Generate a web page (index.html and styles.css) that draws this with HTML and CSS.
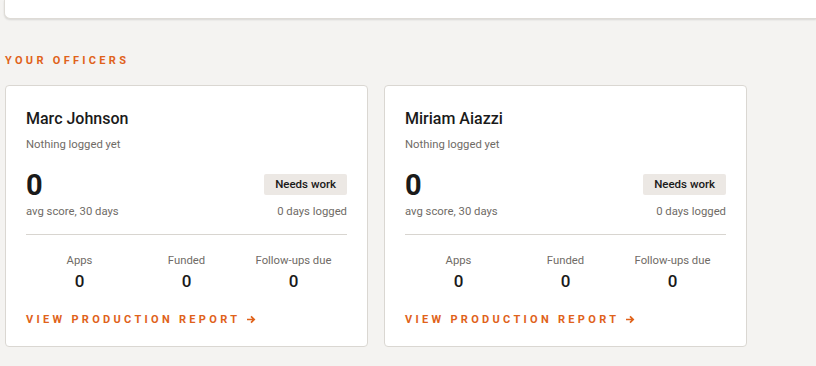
FILE: index.html
```html
<html>
<head>
  <link rel="stylesheet" href="styles.css">
</head>
<body>
<div class="toppanel"></div>
<h2 class="sectiontitle">Your officers</h2>
<div class="officers">
  <div class="officer">
    <div class="naam">Marc Johnson</div>
    <div class="sub">Nothing logged yet</div>
    <div class="scorerow">
      <div class="score">0</div>
      <div class="badge">Needs work</div>
    </div>
    <div class="scorerow meta">
      <span>avg score, 30 days</span>
      <span>0 days logged</span>
    </div>
    <div class="stats">
      <div class="stat"><div class="label">Apps</div><div class="val">0</div></div>
      <div class="stat"><div class="label">Funded</div><div class="val">0</div></div>
      <div class="stat"><div class="label">Follow-ups due</div><div class="val">0</div></div>
    </div>
    <a class="report" href="#">View production report <svg class="pijl" width="10" height="9" viewBox="0 0 10 9"><path d="M1 4.5h7M5 1.3l3.2 3.2L5 7.7" fill="none" stroke="#e0621a" stroke-width="1.7"/></svg></a>
  </div>
  <div class="officer">
    <div class="naam">Miriam Aiazzi</div>
    <div class="sub">Nothing logged yet</div>
    <div class="scorerow">
      <div class="score">0</div>
      <div class="badge">Needs work</div>
    </div>
    <div class="scorerow meta">
      <span>avg score, 30 days</span>
      <span>0 days logged</span>
    </div>
    <div class="stats">
      <div class="stat"><div class="label">Apps</div><div class="val">0</div></div>
      <div class="stat"><div class="label">Funded</div><div class="val">0</div></div>
      <div class="stat"><div class="label">Follow-ups due</div><div class="val">0</div></div>
    </div>
    <a class="report" href="#">View production report <svg class="pijl" width="10" height="9" viewBox="0 0 10 9"><path d="M1 4.5h7M5 1.3l3.2 3.2L5 7.7" fill="none" stroke="#e0621a" stroke-width="1.7"/></svg></a>
  </div>
</div>
</body>
</html>
```
FILE: styles.css
```css
body{
    margin: 0;
    padding: 0 0 0 5px;
    background: #f4f3f1;
    font-family: Roboto, "Liberation Sans", sans-serif;
    color: #1a1a1a;
    overflow: hidden;
}
.toppanel{
    height: 18px;
    background: white;
    border: 1px solid #dedbd6;
    border-top: none;
    border-right: none;
    border-radius: 0 0 0 6px;
    box-shadow: 0 1px 2px rgba(0,0,0,0.12);
    margin-left: -1px;
}
.sectiontitle{
    margin: 36px 0 0 0;
    font-size: 11px;
    font-weight: 700;
    letter-spacing: 3.3px;
    text-transform: uppercase;
    color: #e0621a;
    line-height: 12px;
}
.officers{
    display: grid;
    grid-template-columns: 363px 363px;
    gap: 16px;
    margin-top: 18px;
}
.officer{
    background: white;
    border: 1px solid #dad7d2;
    border-radius: 4px;
    padding: 23px 20px 19px 20px;
}
.naam{
    font-size: 16px;
    font-weight: 500;
    line-height: 20px;
}
.sub{
    font-size: 11.3px;
    color: #6f6b66;
    margin-top: 9px;
    line-height: 14px;
}
.scorerow{
    display: flex;
    justify-content: space-between;
    align-items: flex-start;
    margin-top: 18px;
}
.score{
    font-size: 29px;
    font-weight: 700;
    line-height: 30px;
}
.badge{
    background: #ece8e4;
    border-radius: 2px;
    font-size: 11.5px;
    font-weight: 500;
    padding: 4px 11px;
    line-height: 13px;
    margin-top: 4px;
}
.scorerow.meta{
    margin-top: 5px;
    font-size: 11.3px;
    color: #6f6b66;
    line-height: 14px;
}
.stats{
    display: grid;
    grid-template-columns: 1fr 1fr 1fr;
    border-top: 1px solid #d8d5d0;
    margin-top: 15px;
    padding-top: 19px;
    text-align: center;
}
.label{
    font-size: 11.3px;
    color: #6f6b66;
    line-height: 14px;
}
.val{
    font-size: 17px;
    font-weight: 500;
    line-height: 20px;
    margin-top: 3px;
}
.report{
    display: block;
    margin-top: 22px;
    font-size: 11px;
    font-weight: 700;
    letter-spacing: 3.3px;
    text-transform: uppercase;
    color: #e0621a;
    text-decoration: none;
    line-height: 14px;
}
.pijl{
    vertical-align: -1px;
}
```
